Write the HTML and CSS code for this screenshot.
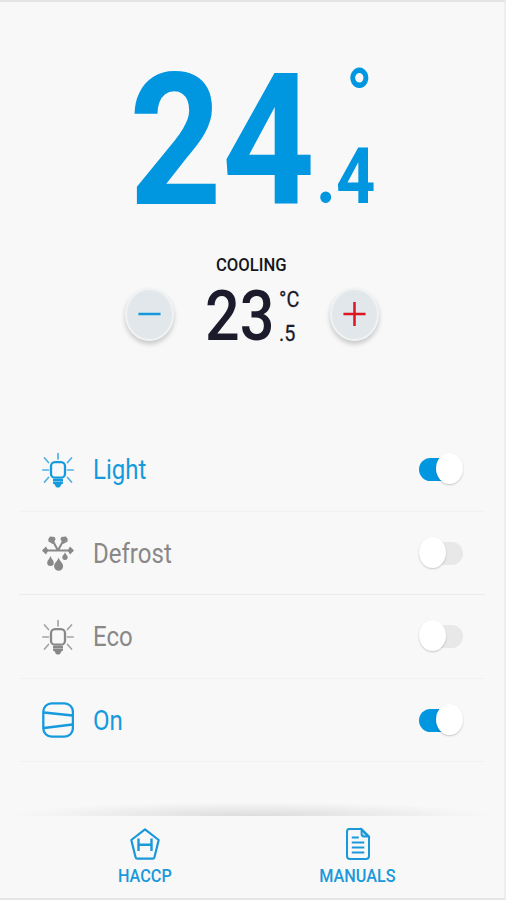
FILE: index.html
```html
<!DOCTYPE html>
<html lang="en">
<head>
<meta charset="utf-8">
<title>Temperature control</title>
<link rel="stylesheet" href="styles.css">
</head>
<body>
<svg class="defs" width="0" height="0">
  <symbol id="bulb" viewBox="0 0 32 36">
    <g fill="none" stroke="currentColor" stroke-linecap="round">
      <rect x="9" y="10.200" width="14" height="15.500" rx="4" stroke-width="2.300"/>
      <path stroke-width="1.700" opacity=".75" d="M16 1.500V7M2.500 6l4 4.500M29.500 6l-4 4.500M.9 18H6.500M25.500 18h5.600M2.500 30l4-4.500M29.500 30l-4-4.500"/>
    </g>
    <path fill="currentColor" d="M11 27h10v4.500l-2 1.200c-.4 3.800-5.600 3.800-6 0l-2-1.200z"/>
    <path fill="none" stroke="#f8f8f8" stroke-width=".4" d="M11 29.500h10"/>
  </symbol>
</svg>
<main class="screen">
  <section class="current">
    <span class="whole">24</span>
    <span class="side"><span class="degree">°</span><span class="decimal">.4</span></span>
  </section>
  <section class="setpoint">
    <h1 class="mode"><span>COOLING</span></h1>
    <div class="adjust">
      <button class="round minus" aria-label="Decrease"><svg viewBox="0 0 26 26"><path d="M1.500 13h23"/></svg></button>
      <div class="target"><span class="target-whole">23</span><span class="target-side"><span>°C</span><span>.5</span></span></div>
      <button class="round plus" aria-label="Increase"><svg viewBox="0 0 26 26"><path d="M1.500 13h23M13 .5v25"/></svg></button>
    </div>
  </section>
  <ul class="options">
    <li class="option active"><svg class="icon"><use href="#bulb"/></svg><span class="label">Light</span><i class="switch"></i></li>
    <li class="option"><svg class="icon" viewBox="0 0 32 36">
      <g fill="none" stroke="currentColor" stroke-width="2">
        <path d="M1 15.500h30M16 15.500L9 2.500M16 15.500l7-13"/>
        <path stroke-width="1.800" d="M6.500 5.500l4 2.300 2.500-4.500M19 3.300l2.500 4.500 4-2.300"/>
      </g>
      <path fill="currentColor" d="M6 4.500l2-3 5 .5-2.600 5zM26 4.500l-2-3-5 .5 2.600 5zM0 15.500l4-4 2.300 4-2.300 4zM32 15.500l-4-4-2.300 4 2.300 4z"/>
      <path fill="currentColor" d="M8.500 21c1 3.200 3.300 4.300 3.300 6.700a3.300 3.300 0 0 1-6.600 0c0-2.400 2.300-3.500 3.300-6.700zM23 17.200c.8 2.400 2.700 3.200 2.700 5a2.700 2.700 0 0 1-5.400 0c0-1.800 1.900-2.600 2.700-5zM16.600 22.500c1.400 4.200 4.500 5.400 4.500 8.700a4.500 4.500 0 0 1-9 0c0-3.300 3.100-4.500 4.500-8.700z"/>
    </svg><span class="label">Defrost</span><i class="switch"></i></li>
    <li class="option"><svg class="icon"><use href="#bulb"/></svg><span class="label">Eco</span><i class="switch"></i></li>
    <li class="option active"><svg class="icon" viewBox="0 0 32 36">
      <g fill="none" stroke="currentColor" stroke-width="2.300"><rect x="1.300" y="1.300" width="29.600" height="33.400" rx="8.500"/><path d="M2 10.500l28.500 3M2 26l28.500-3.500"/></g>
    </svg><span class="label">On</span><i class="switch"></i></li>
  </ul>
  <nav class="tabs">
    <a class="tab"><svg class="tab-icon" viewBox="0 0 32 34"><path stroke-width="2.200" stroke-linejoin="round" d="M16 2.300L29.700 13l-4.200 17q-.4 1.700-2 1.700h-15q-1.600 0-2-1.700L2.300 13z"/><path stroke-width="2.400" d="M9.500 11.500v12.500M22.500 11.500v12.500M9.500 17.800h13"/></svg><span>HACCP</span></a>
    <a class="tab"><svg class="tab-icon" viewBox="0 0 32 34"><path stroke-width="2" d="M7 2h12.500L27 9.500V29q0 3-3 3H8q-3 0-3-3V5q0-3 2-3z"/><path stroke-width="1.800" fill="currentColor" fill-opacity=".4" d="M19.500 2.500v4.500q0 2.500 2.500 2.500h4.500z"/><path stroke-width="1.900" d="M9.800 10.500h7M9.800 15.500h12.500M9.800 20.500h12.500M9.800 25.500h12.500"/></svg><span>MANUALS</span></a>
  </nav>
</main>
</body>
</html>
```
FILE: styles.css
```css
* { box-sizing: border-box; }
body { margin: 0; background: #f8f8f8; font-family: Roboto, "Liberation Sans", sans-serif; }
.defs { display: block; height: 0; }
.screen {
  width: 506px; height: 900px; display: flex; flex-direction: column; overflow: hidden;
  border-top: 2px solid #e4e4e4; border-right: 2px solid #eee; border-bottom: 2px solid #e6e6e6;
}
.current { height: 250px; display: flex; padding: 66px 0 0 129px; color: #0096e0; font-weight: 700; }
.whole { width: 186px; margin-top: 5px; font-size: 183px; line-height: 138px; transform: scaleX(.885); transform-origin: 0 0; white-space: nowrap; }
.side { display: flex; flex-direction: column; transform: scaleX(.88); transform-origin: 0 0; margin-left: 1px; }
.degree { font-size: 78px; line-height: 60px; height: 70px; padding-left: 34px; }
.decimal { font-size: 78px; line-height: 78px; }
.setpoint { height: 176px; color: #1b1b2b; }
.mode { margin: 0; padding-right: 1px; font-size: 18.5px; line-height: 26px; font-weight: 500; text-align: center; color: #16161c; }
.mode span { display: inline-block; transform: scaleX(.9); }
.adjust { display: flex; align-items: center; height: 72px; padding: 0 125px 0 125px; justify-content: space-between; }
.round {
  width: 49px; height: 53px; padding: 0; border: 2px solid #f0f3f4; border-radius: 50%; background: #e1e7ea;
  box-shadow: 0 3px 5px rgba(0, 0, 0, .2); display: grid; place-items: center;
}
.round svg { width: 25px; height: 26px; fill: none; stroke: #1598dc; stroke-width: 2.6; }
.plus svg { stroke: #dc1622; }
.target { width: 94px; display: flex; align-items: center; padding-top: 4px; }
.target-whole { width: 74px; flex: none; font-size: 71px; line-height: 72px; font-weight: 500; transform: scaleX(.86); transform-origin: 0 0; }
.target-side { display: flex; flex-direction: column; font-size: 22.5px; line-height: 34px; transform: scaleX(.88); transform-origin: 0 0; -webkit-text-stroke: .3px; }
.options { margin: 0; padding: 0 19px; list-style: none; }
.option { height: 83.5px; display: flex; align-items: center; padding: 1px 22px 0 23px; border-bottom: 1px solid #f2f2f2; color: #888; }
.option:nth-child(2) { border-color: #ececec; }
.active { color: #149add; }
.icon { width: 32px; height: 36px; flex: none; }
.label { margin-left: 19px; padding-top: 1px; font-size: 27px; line-height: 36px; transform: scaleX(.89); transform-origin: 0 0; }
.switch { margin-left: auto; position: relative; width: 44px; height: 23px; border-radius: 12px; background: #e8e8e8; }
.switch::after {
  content: ""; position: absolute; top: -5px; left: 0; width: 27px; height: 31px; border-radius: 50%;
  background: #fff; box-shadow: 0 1px 2px rgba(0, 0, 0, .2);
}
.active .switch { background: linear-gradient(90deg, #0096e0 60%, #f8f8f8 60%); }
.active .switch::after { left: 17px; }
.tabs { position: relative; flex: 1; margin-top: 53px; display: flex; padding: 12px 0 0 38px; color: #1a98d9; }
.tabs::before {
  content: ""; position: absolute; left: 0; right: 0; top: -13px; height: 14px;
  background: radial-gradient(ellipse 48% 100% at 50% 100%, #dcdcdc, #e9e9e9 45%, #f8f8f8);
}
.tab { width: 213px; display: flex; flex-direction: column; align-items: center; font-size: 18px; line-height: 24px; font-weight: 500; }
.tab-icon { width: 32px; height: 34px; margin-bottom: 3px; fill: none; stroke: currentColor; }
.tab span { transform: scaleX(.9); }
```
